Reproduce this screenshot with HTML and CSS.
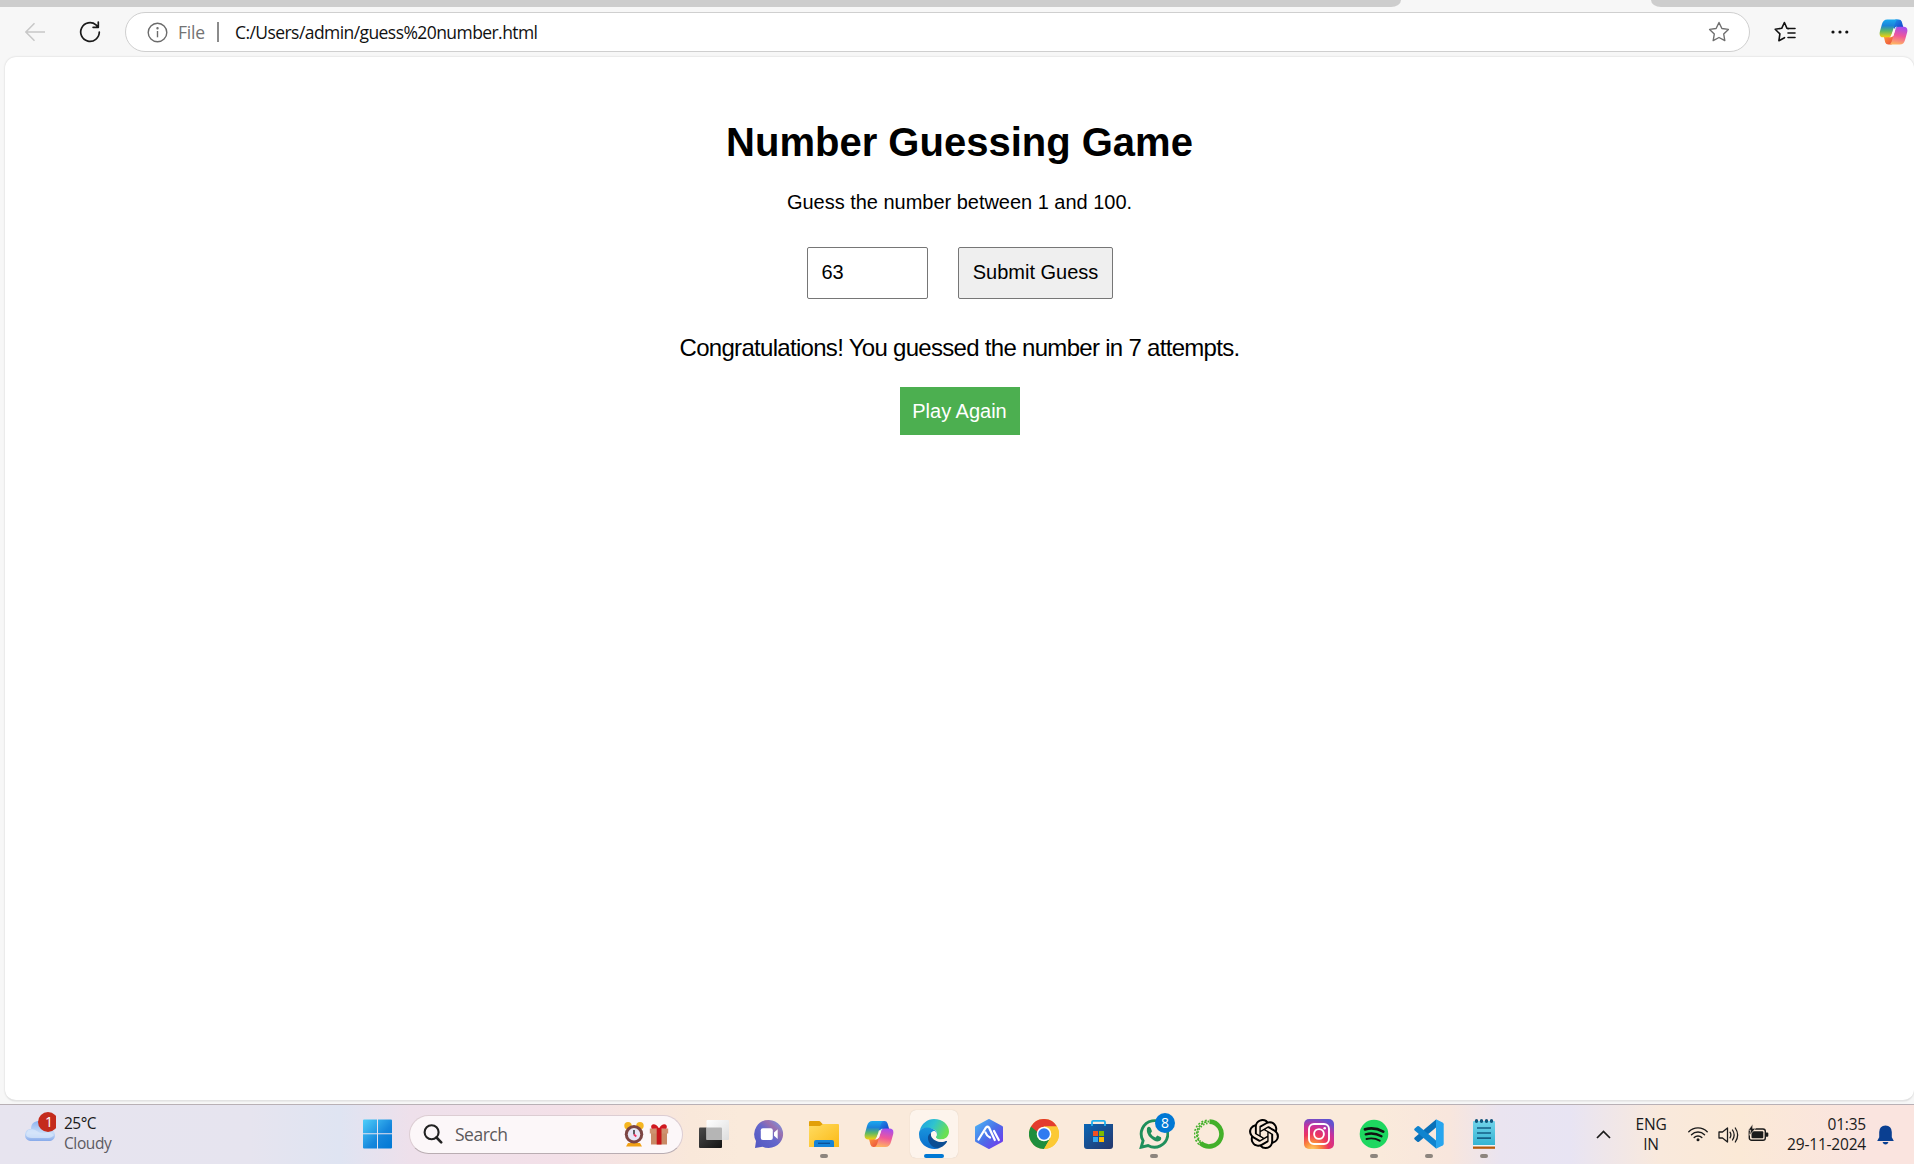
FILE: index.html
```html
<!DOCTYPE html>
<html lang="en">
<head>
<meta charset="utf-8">
<title>Number Guessing Game</title>
<link rel="stylesheet" href="styles.css">
</head>
<body>
<svg class="defs" width="0" height="0" aria-hidden="true">
  <defs>
    <linearGradient id="cpA" x1="0" y1="0" x2="0" y2="1"><stop offset="0" stop-color="#1aa9f0"/><stop offset=".35" stop-color="#1b83d8"/><stop offset=".65" stop-color="#5db866"/><stop offset="1" stop-color="#f5d20c"/></linearGradient>
    <linearGradient id="cpB" x1=".6" y1="0" x2=".4" y2="1"><stop offset="0" stop-color="#a54df0"/><stop offset=".5" stop-color="#f0579a"/><stop offset="1" stop-color="#ffb560"/></linearGradient>
    <linearGradient id="cpC" x1="0" y1="0" x2="1" y2="1"><stop offset="0" stop-color="#1f9ef0"/><stop offset="1" stop-color="#1437c4"/></linearGradient>
    <linearGradient id="cpD" x1="0" y1="0" x2="1" y2="1"><stop offset="0" stop-color="#ffa23e"/><stop offset="1" stop-color="#e8403c"/></linearGradient>
    <symbol id="copilot" viewBox="0 0 30 28">
      <path d="M17 1h3.500q2.200 0 3 2.200l1.700 5.800h-5q-2.500 0-3.300 2.500L13 8z" fill="url(#cpC)"/>
      <path d="M13 27H9.500q-2.200 0-3-2.200L5 19h4.500q2.500 0 3.300-2.500L17 20z" fill="url(#cpD)"/>
      <path d="M8.500 1H20q-2.200.3-3 2.800l-4 12.700q-.9 3-3.700 3H4.500Q-.2 19.500.8 14L3 6Q4.300 1 8.500 1z" fill="url(#cpA)"/>
      <path d="M21.500 27H10q2.200-.3 3-2.800l4-12.700q.9-3 3.700-3h4.800q4.700 0 3.700 5.500L27 22q-1.300 5-5.500 5z" fill="url(#cpB)"/>
      <path d="M16.800 9.200q.9-.8 2.700-.8h-.3q-1.700.6-2.400 3l-1.700 5.600q-.8 2.300-3 2.500H10q2.200-.3 3-3z" fill="#fff6ef"/>
    </symbol>
  </defs>
</svg>

<div class="tabstrip"><span class="tabs-left"></span><span class="tabs-right"></span></div>

<header class="toolbar">
  <svg class="back" width="20" height="20" viewBox="0 0 20 20" fill="none" stroke="#c8c8c8" stroke-width="1.5"><path d="M20 10H1M9.500 1.200L.9 10l8.600 8.800"/></svg>
  <svg class="reload" width="22" height="22" viewBox="0 0 22 22" fill="none" stroke="#1a1a1a" stroke-width="1.700" stroke-linecap="round" stroke-linejoin="round"><path d="M20.300 11a9.300 9.300 0 1 1-3.300-7.100l1.900 2M19.300 1v5.300h-5.200"/></svg>
  <div class="address">
    <svg class="info" width="21" height="21" viewBox="0 0 21 21" fill="none" stroke="#6b6b6b" stroke-width="1.400"><circle cx="10.500" cy="10.500" r="9.300"/><path d="M10.500 9v6.300"/><circle cx="10.500" cy="6.300" r=".5" fill="#6b6b6b"/></svg>
    <span class="scheme">File</span>
    <span class="bar"></span>
    <span class="url">C:/Users/admin/guess%20number.html</span>
    <svg class="star" width="22" height="22" viewBox="0 0 22 22" fill="none" stroke="#6f6f6f" stroke-width="1.400" stroke-linejoin="round"><path d="M11 1.500l2.900 6 6.500.9-4.700 4.600 1.100 6.600-5.800-3.100-5.800 3.100 1.100-6.600L1.600 8.400l6.500-.9z"/></svg>
  </div>
  <svg class="favs" width="22" height="22" viewBox="0 0 22 22" fill="none" stroke="#111" stroke-width="1.600" stroke-linejoin="round" stroke-linecap="round"><path d="M14.200 7.600L13 7.300 10.400 1.500 7.700 7.300 1.200 8.300l4.700 4.600-1 6.800 5.600-3"/><path d="M14 7.500h7M14 12h7M14 16.500h7"/></svg>
  <svg class="dots" width="18" height="4" viewBox="0 0 18 4" fill="#111"><circle cx="2" cy="2" r="1.600"/><circle cx="9" cy="2" r="1.600"/><circle cx="15.800" cy="2" r="1.600"/></svg>
  <svg class="cp" width="29" height="28"><use href="#copilot"/></svg>
</header>

<main class="page">
  <h1 class="title">Number Guessing Game</h1>
  <p class="hint">Guess the number between 1 and 100.</p>
  <div class="form">
    <input class="guess" type="text" value="63" aria-label="Guess">
    <button class="submit">Submit Guess</button>
  </div>
  <p class="message">Congratulations! You guessed the number in 7 attempts.</p>
  <button class="again">Play Again</button>
</main>

<footer class="taskbar">
  <div class="weather">
    <svg class="cloud" width="32" height="34" viewBox="0 0 32 34">
      <defs><linearGradient id="cl" x1="0" y1="0" x2="0" y2="1"><stop offset="0" stop-color="#8db4f0"/><stop offset=".6" stop-color="#c9ddf8"/><stop offset="1" stop-color="#86a9ea"/></linearGradient></defs>
      <path d="M7 17C7 11 11 9 15 9s8 3 9 8c4 0 7 2 7 6s-3 6-6 6H8c-4 0-7-2-7-6s3-6 6-6z" fill="url(#cl)"/>
      <path d="M4 18q5-2 9 1 3 3 8 2 6-1 9 2-2 3-6 3H8q-5 0-6-3z" fill="#d8e7fb" opacity=".75"/>
      <circle cx="24" cy="10" r="10" fill="#c42b1c"/>
      <text x="25" y="15.200" class="badge-one">1</text>
    </svg>
    <div class="stack"><span class="temp">25°C</span><span class="sky">Cloudy</span></div>
  </div>

  <nav class="apps">
    <span class="tile"><svg width="30" height="30" viewBox="0 0 30 30"><defs><linearGradient id="wn" gradientUnits="userSpaceOnUse" x1="0" y1="0" x2="29" y2="29"><stop offset="0" stop-color="#4fd0fa"/><stop offset=".6" stop-color="#1586dc"/><stop offset="1" stop-color="#0078d4"/></linearGradient></defs><path d="M1 .5H14v13.700H0V1.500q0-1 1-1zM15 .5h13q1 0 1 1v12.700H15zM0 15.300h14v14.200H1q-1 0-1-1zM15 15.300h14v13.200q0 1-1 1H15z" fill="url(#wn)"/></svg></span>

    <div class="search">
      <svg width="20" height="20" viewBox="0 0 20 20" fill="none" stroke="#222" stroke-width="2.100"><circle cx="8.600" cy="8.200" r="7"/><path d="M13.500 13.500l4.700 4.800" stroke-width="2.600" stroke-linecap="round"/></svg>
      <span class="search-label">Search</span>
      <svg class="clock" width="20" height="26" viewBox="0 0 20 26"><path d="M4 22h12l2 3.500H2z" fill="#f2a114"/><circle cx="4" cy="4.800" r="3.700" fill="#f5b520"/><circle cx="16" cy="4.800" r="3.700" fill="#f5b520"/><circle cx="10" cy="13.300" r="9.200" fill="#7c4543"/><circle cx="10" cy="13.300" r="6.200" fill="#e7e6f5"/><path d="M10 9v4.500" stroke="#222" stroke-width="1.400"/><path d="M10 13.500l2.300 2" stroke="#f03060" stroke-width="1.700"/></svg>
      <svg class="gift" width="20" height="22" viewBox="0 0 20 22"><path d="M2 7h16v14.500H2z" fill="#c98a66"/><path d="M.8 5.500h18.400v5H.8z" fill="#cf9270"/><path d="M7.700 5h4.800v16.500H7.700z" fill="#c8151b"/><path d="M10 5.500Q7 .5 3.500 1.500 1.200 3 2.800 5.800zM10 5.500q3-5 6.500-4 2.300 1.500.7 4.300z" fill="#d0191f"/></svg>
    </div>

    <span class="tile"><svg width="30" height="30" viewBox="0 0 30 30"><defs><linearGradient id="tv" x1="0" y1="0" x2="1" y2="1"><stop offset="0" stop-color="#4a4a4a"/><stop offset="1" stop-color="#141414"/></linearGradient><linearGradient id="tw" x1="0" y1="0" x2="1" y2="1"><stop offset="0" stop-color="#fff"/><stop offset="1" stop-color="#ddd"/></linearGradient></defs><rect y="8.500" width="23" height="20.500" rx="1" fill="url(#tv)"/><rect x="7.500" y="1" width="22.500" height="20" rx="1" fill="url(#tw)"/><path d="M7.500 8.500H22q1 0 1 1V21H7.500z" fill="#b5b5b5"/></svg></span>

    <span class="tile"><svg width="30" height="30" viewBox="0 0 30 30"><defs><linearGradient id="tm" x1="0" y1="1" x2="1" y2="0"><stop offset="0" stop-color="#5056c0"/><stop offset=".5" stop-color="#6467cc"/><stop offset=".7" stop-color="#9a6fae"/><stop offset="1" stop-color="#6aa3f5"/></linearGradient></defs><path d="M15 1a14.500 14 0 1 1-6.500 26.700L1 29l1-7A14.200 14.200 0 0 1 15 1z" fill="url(#tm)"/><rect x="6.800" y="9.200" width="12" height="11.800" rx="2" fill="#fff"/><path d="M20 13.500l3.700-3.200v9.600L20 16.700z" fill="#fff"/></svg></span>

    <span class="tile run"><svg width="30" height="30" viewBox="0 0 30 30"><defs><linearGradient id="fo" x1="0" y1="0" x2="1" y2="1"><stop offset="0" stop-color="#ffdc62"/><stop offset="1" stop-color="#fbb914"/></linearGradient></defs><path d="M0 3q0-1 1-1h9q1 0 1.700 1L14 5.500V10H0z" fill="#e2a008"/><path d="M0 7h11l3-2h15q1 0 1 1v22H0z" fill="url(#fo)"/><path d="M5 28v-5q0-2 2-2h16q2 0 2 2v5z" fill="#1583d8"/><path d="M9 24.300h12" stroke="#0b4f95" stroke-width="1.300"/></svg></span>

    <span class="tile"><svg width="30" height="28"><use href="#copilot"/></svg></span>

    <span class="tile active"><svg width="30" height="30" viewBox="0 0 30 30"><defs><linearGradient id="eg" x1="0" y1="0" x2="1" y2=".4"><stop offset="0" stop-color="#1b9de2"/><stop offset=".5" stop-color="#2fc3cf"/><stop offset="1" stop-color="#6be052"/></linearGradient><linearGradient id="eb" x1="0" y1="0" x2="0" y2="1"><stop offset="0" stop-color="#1994dc"/><stop offset="1" stop-color="#0a6dcc"/></linearGradient></defs><path d="M.8 11.500C2.500 4.500 8.500 0 15 0c9 0 15 6 15 12.500 0 5-4 8-8.500 8-3.500 0-5.500-1.500-4.300-3.300 2.300-3-.2-6.700-5.200-7.700C8 8.700 4 9 .8 11.500z" fill="url(#eg)"/><path d="M.6 11.800C4 8 9 7.600 13.500 9.800 17 11.500 18.500 14 18 16c-1-4-4-4.500-6-2-2.500 3.500-1.500 8 1.500 11 2.500 2.500 5 4 8 3.700C13 32.500 0 27.500 0 15q0-1.800.6-3.200z" fill="url(#eb)"/><path d="M12 14c-3.500 1.500-4 6-1.500 10 2.500 4.500 7 6 11 4.500 3-1.200 5.200-3.200 6.500-5.700.3-.8-.3-1-1-.7-3 1.300-7 1-10-1.100-2.700-1.900-4-4.500-5-7z" fill="#0c4d93"/><path d="M17.200 17.200c2-4-2-7-4.400-4-2 2.800-.2 5.800 2.700 7.700 3.600 2.400 8.500 2.500 12 .5l-1-1.500c-2 .8-6 1-8.200-.2-1.400-.8-1.600-1.600-1.100-2.500z" fill="#fff5ee"/></svg></span>

    <span class="tile"><svg width="30" height="30" viewBox="0 0 30 30"><defs><linearGradient id="hx" x1="0" y1="0" x2="1" y2="1"><stop offset="0" stop-color="#4cb5f5"/><stop offset=".5" stop-color="#4a6fe8"/><stop offset="1" stop-color="#7436ee"/></linearGradient></defs><path d="M15 1.500L27.500 8.200v13.600L15 28.500 2.500 21.800V8.200z" fill="url(#hx)" stroke="url(#hx)" stroke-width="3" stroke-linejoin="round"/><path d="M4.500 20.500L12 8.500q1.500-1.500 3 0l5.800 12.500M11.500 13.500q1.200 3.500 4.500 5M20 12l4.800 9" fill="none" stroke="#fff" stroke-width="2.200" stroke-linecap="round"/></svg></span>

    <span class="tile"><svg width="30" height="30" viewBox="0 0 30 30"><circle cx="15" cy="15" r="15" fill="#fcc934"/><path d="M2 7.500A15 15 0 0 1 28 7.500H15L8.500 18.800z" fill="#e33b2e"/><path d="M2 7.500A15 15 0 0 0 15 30l6.500-11.300H15z" fill="#1e8e3e"/><path d="M28 7.500H15V15l6.500 3.700L15 30A15 15 0 0 0 28 7.500z" fill="#fcc934"/><circle cx="15" cy="15" r="7.300" fill="#fff"/><circle cx="15" cy="15" r="5.800" fill="#2f7bf0"/></svg></span>

    <span class="tile"><svg width="30" height="30" viewBox="0 0 30 30"><defs><linearGradient id="st" x1="0" y1="0" x2="1" y2="1"><stop offset="0" stop-color="#0a66b5"/><stop offset="1" stop-color="#25366a"/></linearGradient></defs><path d="M0 5h29v22q0 3-3 3H3q-3 0-3-3z" fill="url(#st)"/><path d="M8 7V3q0-1.200 1.200-1.200h10.600Q21 1.800 21 3v4" fill="none" stroke="#1eb0ee" stroke-width="1.800"/><path d="M9 12h5v5H9z" fill="#f25022"/><path d="M15 12h5v5h-5z" fill="#7fba00"/><path d="M9 18h5v5H9z" fill="#35a8ee"/><path d="M15 18h5v5h-5z" fill="#ffb900"/></svg></span>

    <span class="tile run"><svg width="30" height="30" viewBox="0 0 30 30"><path d="M2.200 28.200l1.900-6.500A13.300 13.300 0 1 1 9 26.500z" fill="none" stroke="#1f8f5b" stroke-width="2.900"/><path d="M8 9.200q1.700-2.800 3.700-.3l1.300 3.300-1.300 2.200q1.700 3 4.800 4.200l1.800-2 3.700 1.700q1 3-2.500 4-3.500.8-8-3.500T8 9.200z" fill="#1f8f5b"/></svg><span class="count">8</span></span>

    <span class="tile"><svg width="30" height="30" viewBox="0 0 30 30" fill="none" stroke="#43b02a"><path d="M15.500 2.600A12.400 12.400 0 1 1 6.500 24" stroke-width="4.600"/><path d="M7 24.300A12.500 12.500 0 0 1 15 2.500" stroke-width="1.800" stroke-dasharray="2.500 1"/><path d="M6.500 22.500A11 11 0 0 1 14 4.500" stroke-width="1.500" stroke-dasharray="1.500 1.600"/><path d="M5 25.500A14 14 0 0 1 13 1.300" stroke-width="1.500" stroke-dasharray="2 1.700"/></svg></span>

    <span class="tile"><svg width="30" height="30" viewBox="0 0 24 24"><path d="M22.2819 9.8211a5.9847 5.9847 0 0 0-.5157-4.9108 6.0462 6.0462 0 0 0-6.5098-2.9A6.0651 6.0651 0 0 0 4.9807 4.1818a5.9847 5.9847 0 0 0-3.9977 2.9 6.0462 6.0462 0 0 0 .7427 7.0966 5.98 5.98 0 0 0 .511 4.9107 6.051 6.051 0 0 0 6.5146 2.9001A5.9847 5.9847 0 0 0 13.2599 24a6.0557 6.0557 0 0 0 5.7718-4.2058 5.9894 5.9894 0 0 0 3.9977-2.9001 6.0557 6.0557 0 0 0-.7475-7.0729zm-9.022 12.6081a4.4755 4.4755 0 0 1-2.8764-1.0408l.1419-.0804 4.7783-2.7582a.7948.7948 0 0 0 .3927-.6813v-6.7369l2.02 1.1686a.071.071 0 0 1 .038.052v5.5826a4.504 4.504 0 0 1-4.4945 4.4944zm-9.6607-4.1254a4.4708 4.4708 0 0 1-.5346-3.0137l.142.0852 4.783 2.7582a.7712.7712 0 0 0 .7806 0l5.8428-3.3685v2.3324a.0804.0804 0 0 1-.0332.0615L9.74 19.9502a4.4992 4.4992 0 0 1-6.1408-1.6464zM2.3408 7.8956a4.485 4.485 0 0 1 2.3655-1.9728V11.6a.7664.7664 0 0 0 .3879.6765l5.8144 3.3543-2.0201 1.1685a.0757.0757 0 0 1-.071 0l-4.8303-2.7865A4.504 4.504 0 0 1 2.3408 7.872zm16.5963 3.8558L13.1038 8.364 15.1192 7.2a.0757.0757 0 0 1 .071 0l4.8303 2.7913a4.4944 4.4944 0 0 1-.6765 8.1042v-5.6772a.79.79 0 0 0-.407-.667zm2.0107-3.0231l-.142-.0852-4.7735-2.7818a.7759.7759 0 0 0-.7854 0L9.409 9.2297V6.8974a.0662.0662 0 0 1 .0284-.0615l4.8303-2.7866a4.4992 4.4992 0 0 1 6.6802 4.66zM8.3065 12.863l-2.02-1.1638a.0804.0804 0 0 1-.038-.0567V6.0742a4.4992 4.4992 0 0 1 7.3757-3.4537l-.142.0805L8.704 5.459a.7948.7948 0 0 0-.3927.6813zm1.0976-2.3654l2.602-1.4998 2.6069 1.4998v2.9994l-2.5974 1.4997-2.6067-1.4997Z"/></svg></span>

    <span class="tile"><svg width="30" height="30" viewBox="0 0 30 30"><defs><radialGradient id="ig" cx=".28" cy="1.050" r="1.100"><stop offset="0" stop-color="#ffd76a"/><stop offset=".25" stop-color="#fb8b3c"/><stop offset=".5" stop-color="#ec3460"/><stop offset=".75" stop-color="#c9309c"/><stop offset="1" stop-color="#6152cf"/></radialGradient></defs><rect width="30" height="30" rx="5" fill="url(#ig)"/><rect x="5" y="5" width="20" height="20" rx="5" fill="none" stroke="#fff" stroke-width="1.900"/><circle cx="15" cy="15" r="4.900" fill="none" stroke="#fff" stroke-width="1.900"/><circle cx="20.700" cy="9.300" r="1.300" fill="#fff"/></svg></span>

    <span class="tile run"><svg width="30" height="30" viewBox="0 0 30 30"><circle cx="15" cy="15" r="14.300" fill="#1ed760"/><g fill="none" stroke="#111" stroke-linecap="round"><path d="M6 10.300q9.500-2.600 18.200 2.300" stroke-width="2.800"/><path d="M6.700 15.300q8.300-2.300 15.800 2" stroke-width="2.300"/><path d="M7.500 20q7-1.800 13.200 1.700" stroke-width="1.900"/></g></svg></span>

    <span class="tile run"><svg width="30" height="30" viewBox="0 0 30 30"><path d="M22 .5v8L5 22.700q-.8.700-1.700 0L.7 20.600q-1-1 0-2z" fill="#0a70b8"/><path d="M22 29.500v-8L5 7.300q-.8-.7-1.700 0L.7 9.400q-1 1 0 2z" fill="#0f84cf"/><path d="M22 .3l6.600 3.100q1.100.6 1.100 1.800v19.600q0 1.200-1.100 1.800L22 29.700z" fill="#27a5ee"/></svg></span>

    <span class="tile run"><svg width="30" height="30" viewBox="0 0 30 30"><defs><linearGradient id="np" x1="0" y1="0" x2="0" y2="1"><stop offset="0" stop-color="#70d3ea"/><stop offset="1" stop-color="#35b4d3"/></linearGradient></defs><path d="M4 27h22v2.800H4z" fill="#b55a0c"/><path d="M4 25h22v2.500H4z" fill="#f3f3f3"/><path d="M5 2h20q1 0 1 1v23H4V3q0-1 1-1z" fill="url(#np)"/><path d="M8 9h14M8 14h14M8 19.200h14" stroke="#155f86" stroke-width="1.700"/><g fill="#12557c"><ellipse cx="7.500" cy="2" rx="1.700" ry="2"/><ellipse cx="12.500" cy="2" rx="1.700" ry="2"/><ellipse cx="17.500" cy="2" rx="1.700" ry="2"/><ellipse cx="22.500" cy="2" rx="1.700" ry="2"/></g></svg></span>
  </nav>

  <div class="tray">
    <svg class="chev" width="15" height="9" viewBox="0 0 15 9" fill="none" stroke="#1b1b1b" stroke-width="1.700"><path d="M1 8l6.500-6.500L14 8"/></svg>
    <div class="stack lang"><span>ENG</span><span>IN</span></div>
    <svg class="wifi" width="20" height="16" viewBox="0 0 20 16" fill="none" stroke="#1b1b1b" stroke-width="1.400" stroke-linecap="round"><path d="M.8 5.700a13 13 0 0 1 18.400 0M3.500 8.700a9.200 9.200 0 0 1 13 0M6.200 11.500a5.400 5.400 0 0 1 7.600 0"/><circle cx="10" cy="13.700" r="1.500" fill="#1b1b1b" stroke="none"/></svg>
    <svg class="vol" width="21" height="18" viewBox="0 0 21 18" fill="none" stroke="#1b1b1b" stroke-width="1.300" stroke-linecap="round" stroke-linejoin="round"><path d="M1 6h3.500L9.500 2v14l-5-4H1zM12 6.200q1.800 2.800 0 5.600M14.500 4q3.300 5 0 10M17.300 2q4.700 7 0 14"/></svg>
    <svg class="batt" width="21" height="18" viewBox="0 0 21 18"><rect x="1.300" y="5" width="16" height="11.300" rx="2.300" fill="none" stroke="#1b1b1b" stroke-width="1.400"/><rect x="3.500" y="7.200" width="11.800" height="7" rx="1" fill="#1b1b1b"/><path d="M18 8.500h1.300q1 0 1 1v2.300q0 1-1 1H18z" fill="#1b1b1b"/><path d="M4.800 0L.2 6.200h2.500L1.500 11.300 7.500 4.500H4.600z" fill="#1b1b1b" stroke="#fbe9d8" stroke-width=".6"/></svg>
    <div class="stack when"><span class="time">01:35</span><span class="date">29-11-2024</span></div>
    <svg class="bell" width="17" height="20" viewBox="0 0 17 20" fill="#0a3f91"><path d="M8.500.5q6 0 6.300 6.500v5.300l2 3.700H.2l2-3.700V7Q2.500.5 8.500.5zM5.500 17h6q-1 2.500-3 2.500t-3-2.500z"/></svg>
  </div>
</footer>
</body>
</html>
```
FILE: styles.css
```css
* { box-sizing: border-box; }
html, body { height: 100%; }
body {
  margin: 0;
  display: flex;
  flex-direction: column;
  background: #f7f7f7;
  overflow: hidden;
  font-family: "Open Sans", "Noto Sans", sans-serif;
}
svg { display: block; flex: none; }
.defs { position: absolute; }

/* browser chrome */
.tabstrip { display: flex; justify-content: space-between; height: 7px; flex: none; }
.tabs-left { width: 1401px; background: #cdcdcd; border-bottom-right-radius: 10px 7px; }
.tabs-right { width: 263px; background: #cdcdcd; border-bottom-left-radius: 10px 7px; }
.toolbar { display: flex; align-items: center; height: 50px; flex: none; padding: 0 6px 0 25px; }
.reload { margin-left: 34px; }
.address {
  display: flex;
  align-items: center;
  width: 1625px;
  height: 40px;
  margin-left: 24px;
  padding: 0 19px 0 21px;
  border: 1px solid #cfcfcf;
  border-radius: 20px;
  background: #fff;
  font-size: 17.500px;
  line-height: 24px;
  white-space: nowrap;
}
.scheme { margin: -1px 0 0 10px; color: #737373; width: 27px; letter-spacing: -.2px; }
.bar { width: 2px; height: 20px; margin-left: 12px; background: #8b8b8b; }
.url { margin: -1px 0 0 16px; color: #111; letter-spacing: -.57px; }
.star { margin-left: auto; }
.favs { margin-left: 24px; }
.dots { margin-left: 35px; }
.cp { margin-left: auto; }

/* game page */
.page {
  flex: 1;
  display: flex;
  flex-direction: column;
  align-items: center;
  margin: 0 0 3px 5px;
  padding-top: 62px;
  border: solid #e3e3e3;
  border-width: 0 0 1px;
  border-radius: 11px;
  background: #fff;
  box-shadow: 0 0 2px rgba(0, 0, 0, .18);
  color: #000;
  font-family: "Liberation Sans", Arial, sans-serif;
}
.title { margin: 0; font-size: 40px; line-height: 46px; }
.hint { margin: 26px 0 0; font-size: 20px; line-height: 23px; letter-spacing: -.02px; }
.form { display: flex; gap: 30px; margin-top: 33px; }
.guess, .submit, .again { font: 20px/23px "Liberation Sans", Arial, sans-serif; color: #000; }
.guess { width: 121px; height: 52px; padding: 0 13px 2px 14px; border: 1px solid #767676; border-radius: 2px; background: #fff; }
.submit { width: 155px; height: 52px; padding: 0 0 2px 1px; border: 1px solid #767676; border-radius: 2px; background: #efefef; }
.message { margin: 35px 0 0; font-size: 24px; line-height: 28px; letter-spacing: -.7px; }
.again { width: 120px; height: 48px; margin-top: 25px; padding: 0; border: 0; background: #4caf50; color: #fff; }

/* taskbar */
.taskbar {
  display: flex;
  flex: none;
  height: 60px;
  border-top: 1px solid #b8b0b5;
  background: linear-gradient(90deg, #e7e4ef 0, #e6e4ef 250px, #dfe4f2 340px, #eee0eb 410px, #f3e0e8 560px, #f9e8da 690px, #faeadb 740px, #faeadb 1380px, #f8e6dd 1450px, #eae4f0 1500px, #e8e4f3 1570px, #f9e9dc 1660px, #fbe9d6 1740px, #fae4df 1860px, #fae4df 100%);
  font-size: 15.500px;
  color: #1b1b1b;
}
.weather { display: flex; width: 354px; padding: 7px 0 0 24px; gap: 8px; flex: none; }
.cloud { width: 32px; }
.badge-one { font-size: 14px; fill: #fff; text-anchor: middle; }
.stack { display: flex; flex-direction: column; margin-top: 1px; line-height: 20px; white-space: nowrap; }
.sky { color: #5c5a61; letter-spacing: -.4px; }
.temp { letter-spacing: -.5px; }
.apps { display: flex; align-items: center; gap: 7px; flex: none; height: 58px; }
.tile { position: relative; display: grid; place-items: center; width: 48px; height: 48px; border-radius: 6px; }
.active { background: #fdf4ec; box-shadow: 0 0 1px #cfc0b2; }
.run::after, .active::after {
  content: "";
  position: absolute;
  bottom: 0;
  left: 20px;
  width: 8px;
  height: 4px;
  border-radius: 2px;
  background: #8d857e;
}
.active::after { left: 14px; width: 20px; background: #0078d4; }
.count {
  position: absolute;
  left: 25px;
  top: 3px;
  width: 20px;
  height: 20px;
  border-radius: 50%;
  background: #0078d4;
  color: #fff;
  font-size: 14px;
  line-height: 20px;
  text-align: center;
}
.search {
  display: flex;
  align-items: center;
  width: 274px;
  height: 39px;
  padding: 0 13px;
  border: 1px solid #dccdd3;
  border-bottom-color: #b9adb2;
  border-radius: 20px;
  background: #fcf7f9;
}
.search-label { margin-left: 12px; font-size: 17.500px; color: #5c5a5c; letter-spacing: -.5px; }
.clock { margin-left: auto; }
.gift { margin-left: 5px; }
.tray { display: flex; margin-left: auto; padding: 8px 20px 0 0; }
.chev { margin-top: 17px; }
.lang { width: 40px; margin-left: 20px; text-align: center; letter-spacing: -.2px; }
.wifi { margin: 13px 0 0 17px; }
.vol { margin: 13px 0 0 10px; }
.batt { margin: 11px 0 0 9px; }
.when { width: 97px; text-align: right; letter-spacing: -.2px; }
.bell { margin: 12px 0 0 11px; }
```
